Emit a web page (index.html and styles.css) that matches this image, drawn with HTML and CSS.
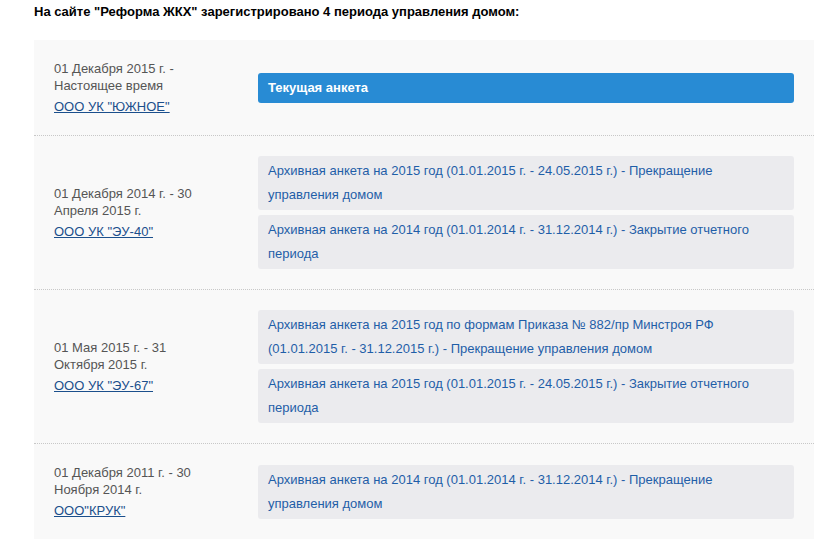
FILE: index.html
```html
<!DOCTYPE html>
<html lang="ru">
<head>
<meta charset="utf-8">
<title>Периоды управления</title>
<link rel="stylesheet" href="styles.css">
</head>
<body>
<div class="page">
  <h2 class="title">На сайте "Реформа ЖКХ" зарегистрировано 4 периода управления домом:</h2>
  <div class="panel">
    <div class="row">
      <div class="period">
        <div class="dates">01 Декабря 2015 г. - Настоящее время</div>
        <a class="org" href="#">ООО УК "ЮЖНОЕ"</a>
      </div>
      <div class="forms">
        <a class="current" href="#">Текущая анкета</a>
      </div>
    </div>
    <div class="row">
      <div class="period">
        <div class="dates">01 Декабря 2014 г. - 30 Апреля 2015 г.</div>
        <a class="org" href="#">ООО УК "ЭУ-40"</a>
      </div>
      <div class="forms">
        <a class="archive" href="#">Архивная анкета на 2015 год (01.01.2015 г. - 24.05.2015 г.) - Прекращение управления домом</a>
        <a class="archive" href="#">Архивная анкета на 2014 год (01.01.2014 г. - 31.12.2014 г.) - Закрытие отчетного периода</a>
      </div>
    </div>
    <div class="row">
      <div class="period">
        <div class="dates">01 Мая 2015 г. - 31 Октября 2015 г.</div>
        <a class="org" href="#">ООО УК "ЭУ-67"</a>
      </div>
      <div class="forms">
        <a class="archive" href="#">Архивная анкета на 2015 год по формам Приказа № 882/пр Минстроя РФ (01.01.2015 г. - 31.12.2015 г.) - Прекращение управления домом</a>
        <a class="archive" href="#">Архивная анкета на 2015 год (01.01.2015 г. - 24.05.2015 г.) - Закрытие отчетного периода</a>
      </div>
    </div>
    <div class="row">
      <div class="period">
        <div class="dates">01 Декабря 2011 г. - 30 Ноября 2014 г.</div>
        <a class="org" href="#">ООО"КРУК"</a>
      </div>
      <div class="forms">
        <a class="archive" href="#">Архивная анкета на 2014 год (01.01.2014 г. - 31.12.2014 г.) - Прекращение управления домом</a>
      </div>
    </div>
  </div>
</div>
</body>
</html>
```

FILE: styles.css
```css
html, body {
  margin: 0;
  padding: 0;
  background: #ffffff;
}

body {
  font-family: "Liberation Sans", Arial, sans-serif;
  font-size: 13px;
  color: #333;
}

.page {
  padding: 3px 5px 0 34px;
}

.title {
  margin: 0;
  font-size: 13px;
  font-weight: bold;
  line-height: 17px;
  color: #000;
}

.panel {
  margin-top: 20px;
  background: #f9f9f9;
  width: 780px;
}

.row {
  display: flex;
  align-items: center;
  padding: 20px;
  border-bottom: 1px dotted #c8c8c8;
}

.row:last-child {
  border-bottom: none;
}

.period {
  width: 150px;
  flex: none;
  margin-right: 54px;
}

.dates {
  color: #555;
  line-height: 17px;
}

.org {
  display: inline-block;
  margin-top: 4px;
  line-height: 17px;
  color: #1b4f8c;
  text-decoration: underline;
}

.forms {
  flex: 1;
  display: flex;
  flex-direction: column;
  gap: 5px;
}

.current {
  display: block;
  background: #288bd4;
  color: #fff;
  font-weight: bold;
  line-height: 30px;
  padding: 0 10px;
  border-radius: 3px;
  text-decoration: none;
}

.archive {
  display: block;
  background: #ebebee;
  color: #1f5ea8;
  line-height: 24px;
  padding: 3px 20px 3px 10px;
  border-radius: 3px;
  text-decoration: none;
}
```
